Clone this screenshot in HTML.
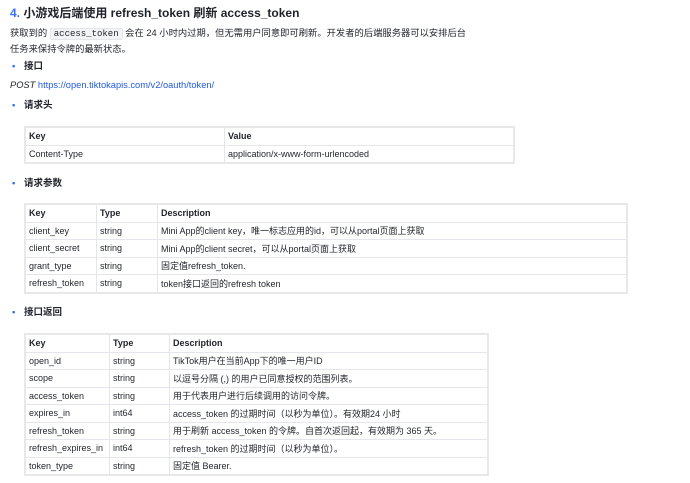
<!DOCTYPE html>
<html><head><meta charset="utf-8"><style>
body{margin:0;width:690px;height:483px;background:#fff;font-family:"Liberation Sans","Noto Sans CJK SC",sans-serif;color:#1f2329;position:relative;overflow:hidden}
.a{position:absolute;white-space:nowrap}
h1{position:absolute;left:10px;top:4px;margin:0;font-size:12px;font-weight:bold;color:#1f2329}
h1 span{color:#3370ff}
.p{font-size:9.3px;left:10px}
code{font-family:"Liberation Mono",monospace;font-size:9px;background:#f2f3f5;border:1px solid #e5e6eb;border-radius:2px;padding:0 3px}
.b{font-size:9.5px;font-weight:bold;left:24px;line-height:12px}
.b:before{content:"•";color:#3370ff;position:absolute;left:-12px;top:0;line-height:12px}
table{position:absolute;left:24px;border-collapse:collapse;font-size:9px;border:2px solid #e8e8e8}
td{border:1px solid #e5e6eb;padding:0 3px;height:16.5px;white-space:nowrap}
tr:first-child td{font-weight:bold}
a{color:#245bdb;text-decoration:none}
</style></head><body>
<h1><span>4.</span> 小游戏后端使用 refresh_token 刷新 access_token</h1>
<div class="a p" style="top:25px">获取到的 <code>access_token</code> 会在 24 小时内过期，但无需用户同意即可刷新。开发者的后端服务器可以安排后台</div>
<div class="a p" style="top:41px">任务来保持令牌的最新状态。</div>
<div class="a b" style="top:61px">接口</div>
<div class="a p" style="top:80px"><i>POST</i> <a>https://open.tiktokapis.com/v2/oauth/token/</a></div>
<div class="a b" style="top:100px">请求头</div>
<table style="top:126px;width:491px"><tr><td style="width:192px">Key</td><td>Value</td></tr><tr><td>Content-Type</td><td>application/x-www-form-urlencoded</td></tr></table>
<div class="a b" style="top:178px">请求参数</div>
<table style="top:203px;width:604px"><tr><td style="width:64px">Key</td><td style="width:54px">Type</td><td>Description</td></tr>
<tr><td>client_key</td><td>string</td><td>Mini App的client key，唯一标志应用的id，可以从portal页面上获取</td></tr>
<tr><td>client_secret</td><td>string</td><td>Mini App的client secret，可以从portal页面上获取</td></tr>
<tr><td>grant_type</td><td>string</td><td>固定值refresh_token.</td></tr>
<tr><td>refresh_token</td><td>string</td><td>token接口返回的refresh token</td></tr></table>
<div class="a b" style="top:307px">接口返回</div>
<table style="top:333px;width:465px"><tr><td style="width:77px">Key</td><td style="width:53px">Type</td><td>Description</td></tr>
<tr><td>open_id</td><td>string</td><td>TikTok用户在当前App下的唯一用户ID</td></tr>
<tr><td>scope</td><td>string</td><td>以逗号分隔 (,) 的用户已同意授权的范围列表。</td></tr>
<tr><td>access_token</td><td>string</td><td>用于代表用户进行后续调用的访问令牌。</td></tr>
<tr><td>expires_in</td><td>int64</td><td>access_token 的过期时间（以秒为单位）。有效期24 小时</td></tr>
<tr><td>refresh_token</td><td>string</td><td>用于刷新 access_token 的令牌。自首次返回起，有效期为 365 天。</td></tr>
<tr><td>refresh_expires_in</td><td>int64</td><td>refresh_token 的过期时间（以秒为单位）。</td></tr>
<tr><td>token_type</td><td>string</td><td>固定值 Bearer.</td></tr></table>
</body></html>
